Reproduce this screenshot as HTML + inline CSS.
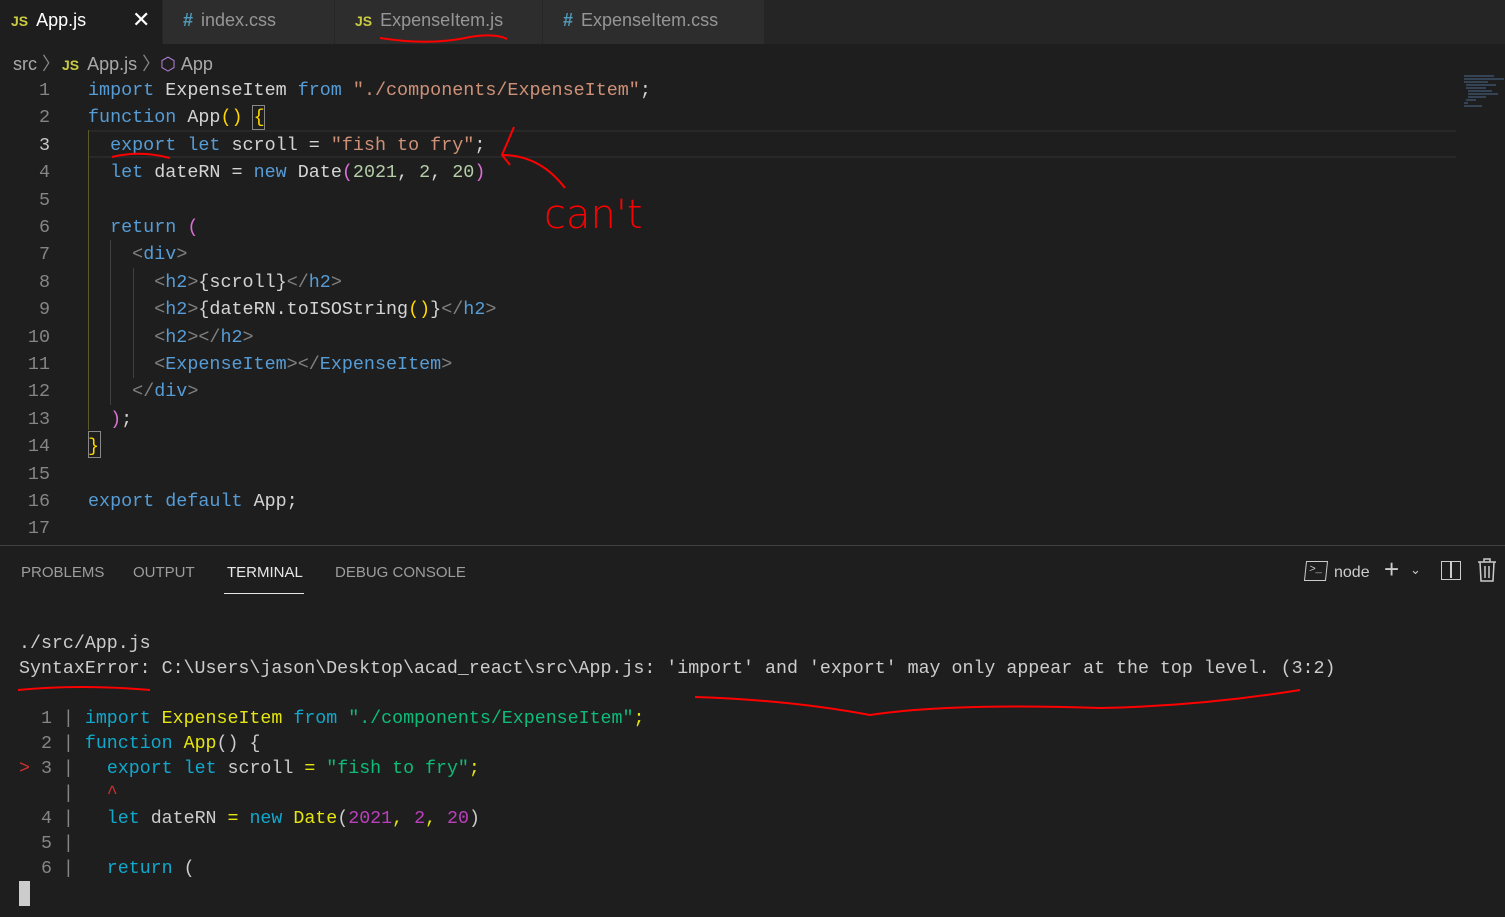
<!DOCTYPE html>
<html><head><meta charset="utf-8"><style>
*{margin:0;padding:0;box-sizing:border-box}
body{width:1505px;height:917px;background:#1e1e1e;overflow:hidden;position:relative;font-family:"Liberation Sans",sans-serif;color:#ccc}
.tabs{position:absolute;top:0;left:0;width:1505px;height:44px;background:#252526}
.tab{position:absolute;top:0;height:44px;background:#2d2d2d;font-size:18px;line-height:40px;color:#969696;padding-left:20px}
.tab.a{background:#1e1e1e;color:#fff}
.js{color:#cbcb41;font-weight:bold;font-size:14px;margin-right:8px}
.hash{color:#519aba;font-weight:bold;margin-right:8px}
.crumb{position:absolute;top:50px;left:13px;font-size:18px;color:#a9a9a9}
.mono{font-family:"Liberation Mono",monospace;font-size:18.4px;white-space:pre}
.ln{position:absolute;left:0;width:50px;text-align:right;color:#858585;line-height:27.4px}
.code{position:absolute;left:88px}
.k{color:#569cd6}.s{color:#ce9178}.t{color:#808080}.b{color:#ffd700}.n{color:#b5cea8}.d{color:#d4d4d4}.p{color:#da70d6}.c{color:#9cdcfe}
.panel{position:absolute;top:545px;left:0;width:1505px;height:372px;border-top:1px solid #414141;background:#1e1e1e}
.ptab{position:absolute;top:18px;font-size:15px;color:#9d9d9d}
.ln2{color:#858585}
.tc{color:#11a8cd}.ty{color:#e5e510}.tg{color:#0dbc79}.tm{color:#bc3fbc}.tr{color:#cd3131}
</style></head><body>
<div class="tabs">
<div class="tab a" style="left:0;width:162px;padding-left:11px"><span class="js">JS</span>App.js<span style="position:absolute;left:132px;color:#fff;font-size:22px">✕</span></div>
<div class="tab" style="left:163px;width:171px"><span class="hash">#</span>index.css</div>
<div class="tab" style="left:335px;width:207px"><span class="js">JS</span>ExpenseItem.js</div>
<div class="tab" style="left:543px;width:221px"><span class="hash">#</span>ExpenseItem.css</div>
</div>
<div class="crumb">src <span style="color:#888">〉</span><span class="js" style="margin-left:2px">JS</span>App.js <span style="color:#888">〉</span><span style="color:#b180d7">⬡</span> App</div>
<div style="position:absolute;left:88px;top:130px;width:1368px;height:28px;border-top:2px solid #282828;border-bottom:2px solid #282828"></div>
<div style="position:absolute;left:252px;top:105px;width:13px;height:25px;border:1px solid #888"></div>
<div style="position:absolute;left:88px;top:431px;width:13px;height:27px;border:1px solid #888"></div>
<div style="position:absolute;left:88px;top:130px;height:300px;border-left:1px solid #5a5a2a"></div>
<div style="position:absolute;left:110px;top:240px;height:165px;border-left:1px solid #404040"></div>
<div style="position:absolute;left:133px;top:268px;height:110px;border-left:1px solid #404040"></div>
<div class="mono">
<div class="ln" style="top:77px">1</div><div class="ln" style="top:104.4px">2</div><div class="ln" style="top:131.8px;color:#c6c6c6">3</div><div class="ln" style="top:159.2px">4</div><div class="ln" style="top:186.6px">5</div><div class="ln" style="top:214px">6</div><div class="ln" style="top:241.4px">7</div><div class="ln" style="top:268.8px">8</div><div class="ln" style="top:296.2px">9</div><div class="ln" style="top:323.6px">10</div><div class="ln" style="top:351px">11</div><div class="ln" style="top:378.4px">12</div><div class="ln" style="top:405.8px">13</div><div class="ln" style="top:433.2px">14</div><div class="ln" style="top:460.6px">15</div><div class="ln" style="top:488px">16</div><div class="ln" style="top:515.4px">17</div>
<div class="code d" style="top:77px;line-height:27.4px"><span class="k">import</span> ExpenseItem <span class="k">from</span> <span class="s">"./components/ExpenseItem"</span>;
<span class="k">function</span> App<span class="b">()</span> <span class="b">{</span>
  <span class="k">export</span> <span class="k">let</span> scroll = <span class="s">"fish to fry"</span>;
  <span class="k">let</span> dateRN = <span class="k">new</span> Date<span class="p">(</span><span class="n">2021</span>, <span class="n">2</span>, <span class="n">20</span><span class="p">)</span>

  <span class="k">return</span> <span class="p">(</span>
    <span class="t">&lt;</span><span class="k">div</span><span class="t">&gt;</span>
      <span class="t">&lt;</span><span class="k">h2</span><span class="t">&gt;</span>{scroll}<span class="t">&lt;/</span><span class="k">h2</span><span class="t">&gt;</span>
      <span class="t">&lt;</span><span class="k">h2</span><span class="t">&gt;</span>{dateRN.toISOString<span class="b">()</span>}<span class="t">&lt;/</span><span class="k">h2</span><span class="t">&gt;</span>
      <span class="t">&lt;</span><span class="k">h2</span><span class="t">&gt;&lt;/</span><span class="k">h2</span><span class="t">&gt;</span>
      <span class="t">&lt;</span><span class="k">ExpenseItem</span><span class="t">&gt;&lt;/</span><span class="k">ExpenseItem</span><span class="t">&gt;</span>
    <span class="t">&lt;/</span><span class="k">div</span><span class="t">&gt;</span>
  <span class="p">)</span>;
<span class="b">}</span>

<span class="k">export</span> <span class="k">default</span> App;
</div></div>
<svg style="position:absolute;left:1462px;top:75px" width="42" height="34" stroke-width="1">
<path d="M2 1h30M2 4h40M2 7h24M4 10h30M4 13h20M6 16h24M6 19h30M6 22h18M4 25h10M2 28h4M2 31h18" stroke="#4a6a8a"/></svg>
<div class="panel">
<div class="ptab" style="left:21px">PROBLEMS</div>
<div class="ptab" style="left:133px">OUTPUT</div>
<div class="ptab" style="left:227px;color:#e7e7e7">TERMINAL</div>
<div style="position:absolute;left:224px;top:47px;width:80px;height:1px;background:#e7e7e7"></div>
<div class="ptab" style="left:335px">DEBUG CONSOLE</div>
<div style="position:absolute;left:1305px;top:15px;width:22px;height:20px;border:1.5px solid #ccc;transform:skewX(-6deg);font-size:11px;line-height:16px;padding-left:3px;font-family:'Liberation Mono'">&gt;_</div>
<div class="ptab" style="left:1334px;color:#ccc;font-size:16px">node</div>
<div style="position:absolute;left:1384px;top:8px;font-size:26px;color:#ccc">+</div>
<div style="position:absolute;left:1410px;top:16px;font-size:13px;color:#ccc">⌄</div>
<div style="position:absolute;left:1441px;top:15px;width:20px;height:19px;border:1.5px solid #ccc"><div style="position:absolute;left:8px;top:0;width:1.5px;height:16px;background:#ccc"></div></div>
<svg style="position:absolute;left:1477px;top:12px" width="20" height="24" fill="none" stroke="#ccc" stroke-width="1.5"><path d="M1 4h18M7 4V1h6v3M3 4l1 19h12l1-19M8 8v12M12 8v12"/></svg>
</div>
<div class="mono" style="position:absolute;left:19px;top:632px;line-height:25px;color:#ccc;font-size:18.3px">./src/App.js
SyntaxError: C:\Users\jason\Desktop\acad_react\src\App.js: 'import' and 'export' may only appear at the top level. (3:2)
</div>
<div class="mono" style="position:absolute;left:19px;top:707px;line-height:25px;color:#ccc;font-size:18.3px">  <span class="ln2">1 |</span> <span class="tc">import</span> <span class="ty">ExpenseItem</span> <span class="tc">from</span> <span class="tg">"./components/ExpenseItem"</span><span class="ty">;</span>
  <span class="ln2">2 |</span> <span class="tc">function</span> <span class="ty">App</span>() {
<span class="tr">&gt;</span> <span class="ln2">3 |</span>   <span class="tc">export</span> <span class="tc">let</span> scroll <span class="ty">=</span> <span class="tg">"fish to fry"</span><span class="ty">;</span>
    <span class="ln2">|</span>   <span class="tr">^</span>
  <span class="ln2">4 |</span>   <span class="tc">let</span> dateRN <span class="ty">=</span> <span class="tc">new</span> <span class="ty">Date</span>(<span class="tm">2021</span><span class="ty">,</span> <span class="tm">2</span><span class="ty">,</span> <span class="tm">20</span>)
  <span class="ln2">5 |</span>
  <span class="ln2">6 |</span>   <span class="tc">return</span> (
</div>
<div style="position:absolute;left:19px;top:881px;width:11px;height:25px;background:#ccc"></div>
<svg style="position:absolute;left:0;top:0" width="1505" height="917" fill="none" stroke="#f00" stroke-width="2">
<path d="M380 38 Q430 46 470 37 Q495 33 507 39"/>
<path d="M112 157 Q140 150 170 158"/>
<path d="M514 127 L502 155 L510 165 M502 155 Q540 155 565 188"/>
<path d="M18 690 Q80 684 150 690"/>
<path d="M695 697 Q790 700 870 715 Q950 703 1100 708 Q1200 706 1300 690"/>
<text x="544" y="228" fill="#f00" stroke="none" font-family="DejaVu Sans" font-size="40" font-weight="200">can't</text>
</svg>
</body></html>
